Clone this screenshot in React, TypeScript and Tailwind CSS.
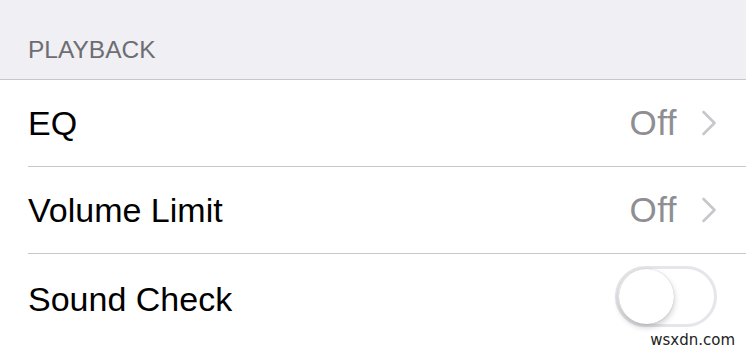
function Chevron() {
  return (
    <svg width="16" height="26" viewBox="0 0 16 26" fill="none" className="text-[#c7c7cc]">
      <path d="M2.5 2 L13.5 13 L2.5 24" stroke="currentColor" strokeWidth="2.6" strokeLinecap="round" strokeLinejoin="round" />
    </svg>
  );
}

function Row({ label, value, last }: { label: string; value?: string; last?: boolean }) {
  return (
    <div className="pl-[28px]">
      <div
        className={`flex items-center h-[87px] pr-[29px] ${last ? "" : "border-b border-[#c8c7cc]"}`}
      >
        <span className="text-[34px] text-black flex-1">{label}</span>
        {value !== undefined ? (
          <div className="flex items-center gap-[24px]">
            <span className="text-[35px] text-[#8e8e93] tracking-[0.5px]">{value}</span>
            <Chevron />
          </div>
        ) : null}
      </div>
    </div>
  );
}

function Toggle() {
  return (
    <div className="w-[102px] h-[61px] rounded-full border-[3px] border-[#e5e5ea] bg-white flex items-center px-[1px]">
      <div className="w-[55px] h-[55px] rounded-full bg-white shadow-[0_3px_6px_rgba(0,0,0,0.22),0_0_1px_rgba(0,0,0,0.25)]" />
    </div>
  );
}

export default function App() {
  return (
    <div className="w-[746px] h-[356px] overflow-hidden bg-white font-['Liberation_Sans',Arial,sans-serif]">
      <div className="h-[80px] bg-[#efeff4] border-b border-[#c8c7cc] flex items-end pl-[28px] pb-[17px]">
        <span className="text-[24.5px] text-[#6d6d72] leading-none">PLAYBACK</span>
      </div>
      <Row label="EQ" value="Off" />
      <Row label="Volume Limit" value="Off" />
      <div className="pl-[28px] pr-[29px] h-[100px] flex items-start pt-[12px] relative">
        <div className="flex items-center h-[61px] w-full">
          <span className="text-[34px] text-black flex-1 mt-[5px]">Sound Check</span>
          <Toggle />
        </div>
        <span className="absolute right-[11px] bottom-[3px] text-[15px] text-[#222] font-['DejaVu_Sans',sans-serif]">
          wsxdn.com
        </span>
      </div>
    </div>
  );
}
